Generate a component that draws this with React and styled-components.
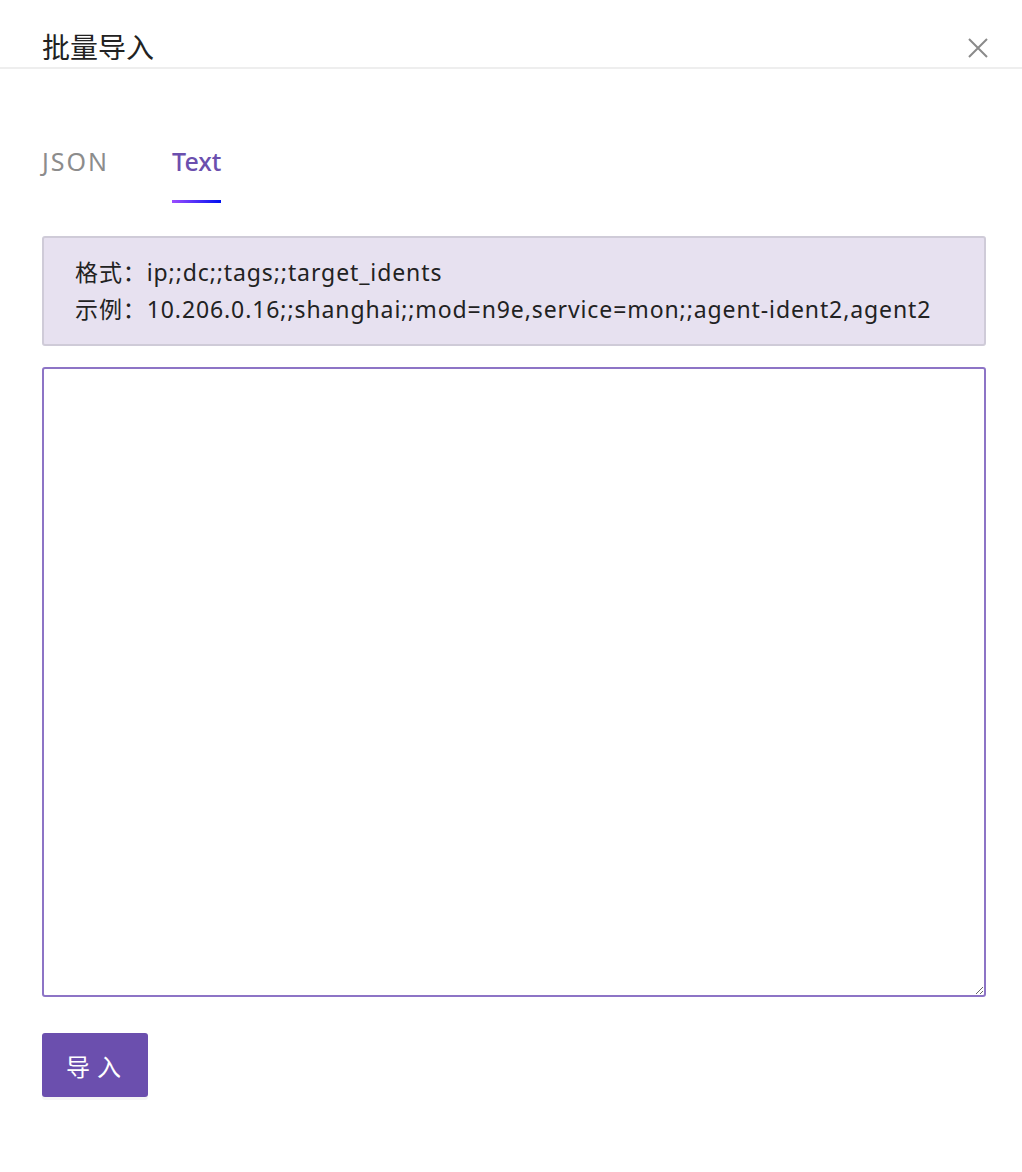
import React, { useState } from "react";
import styled, { createGlobalStyle } from "styled-components";

const Global = createGlobalStyle`
  html, body { margin: 0; padding: 0; background: #fff; }
  body { font-family: "Noto Sans", "Noto Sans CJK SC", sans-serif; color: #262626; }
  * { box-sizing: border-box; }
`;

const Page = styled.div`
  width: 1022px;
  height: 1172px;
  background: #fff;
`;

const Header = styled.div`
  height: 69px;
  border-bottom: 2px solid #eeeeee;
  display: flex;
  align-items: center;
  justify-content: space-between;
  padding: 0 34px 0 42px;
`;

const Title = styled.div`
  font-size: 28px;
  color: #222;
  line-height: 34px;
  margin-top: 25px;
  font-family: "Noto Sans CJK SC", sans-serif;
`;

const Close = styled.button`
  border: none;
  background: none;
  padding: 0;
  width: 20px;
  height: 20px;
  margin-top: 28px;
  display: flex;
  cursor: pointer;
`;

const Body = styled.div`
  padding: 0 36px 0 42px;
`;

const Tabs = styled.div`
  display: flex;
  gap: 63px;
  margin-top: 77px;
`;

const Tab = styled.div`
  position: relative;
  font-size: 25px;
  line-height: 30px;
  padding-bottom: 27px;
  color: ${(p) => (p.$active ? "#6b4fae" : "#8c8c8c")};
  font-weight: ${(p) => (p.$active ? 500 : 400)};
  letter-spacing: ${(p) => (p.$active ? "0" : "2px")};
  cursor: pointer;
  &::after {
    content: "";
    display: ${(p) => (p.$active ? "block" : "none")};
    position: absolute;
    left: 0;
    right: 0;
    bottom: 0;
    height: 3px;
    background: linear-gradient(90deg, #9b4dff, #0010f0);
  }
`;

const Alert = styled.div`
  margin-top: 33px;
  background: #e7e1f0;
  border: 2px solid #cfcbd8;
  border-radius: 3px;
  padding: 16px 31px 16px;
  font-size: 23px;
  line-height: 37px;
  letter-spacing: 0.9px;
  color: #222;
  white-space: nowrap;
`;

const TextArea = styled.textarea`
  display: block;
  width: 100%;
  height: 630px;
  margin-top: 21px;
  border: 2px solid #8d74c6;
  border-radius: 3px;
  outline: none;
  resize: vertical;
  font-family: inherit;
  font-size: 20px;
  padding: 8px 12px;
`;

const Button = styled.button`
  margin-top: 36px;
  width: 106px;
  height: 64px;
  background: #6b4fae;
  color: #fff;
  border: none;
  border-radius: 3px;
  font-size: 24px;
  letter-spacing: 7px;
  padding-left: 10px;
  font-family: "Noto Sans CJK SC", sans-serif;
  box-shadow: 0 3px 0 rgba(0, 0, 0, 0.04);
  cursor: pointer;
`;

export default function App() {
  const [tab, setTab] = useState("text");
  return (
    <Page>
      <Global />
      <Header>
        <Title>批量导入</Title>
        <Close aria-label="close">
          <svg width="20" height="20" viewBox="0 0 20 20">
            <path d="M1 1 L19 19 M19 1 L1 19" stroke="#8a8a8a" strokeWidth="2" fill="none" />
          </svg>
        </Close>
      </Header>
      <Body>
        <Tabs>
          <Tab $active={tab === "json"} onClick={() => setTab("json")}>JSON</Tab>
          <Tab $active={tab === "text"} onClick={() => setTab("text")}>Text</Tab>
        </Tabs>
        <Alert>
          <div>格式：ip;;dc;;tags;;target_idents</div>
          <div>示例：10.206.0.16;;shanghai;;mod=n9e,service=mon;;agent-ident2,agent2</div>
        </Alert>
        <TextArea />
        <Button>导入</Button>
      </Body>
    </Page>
  );
}
